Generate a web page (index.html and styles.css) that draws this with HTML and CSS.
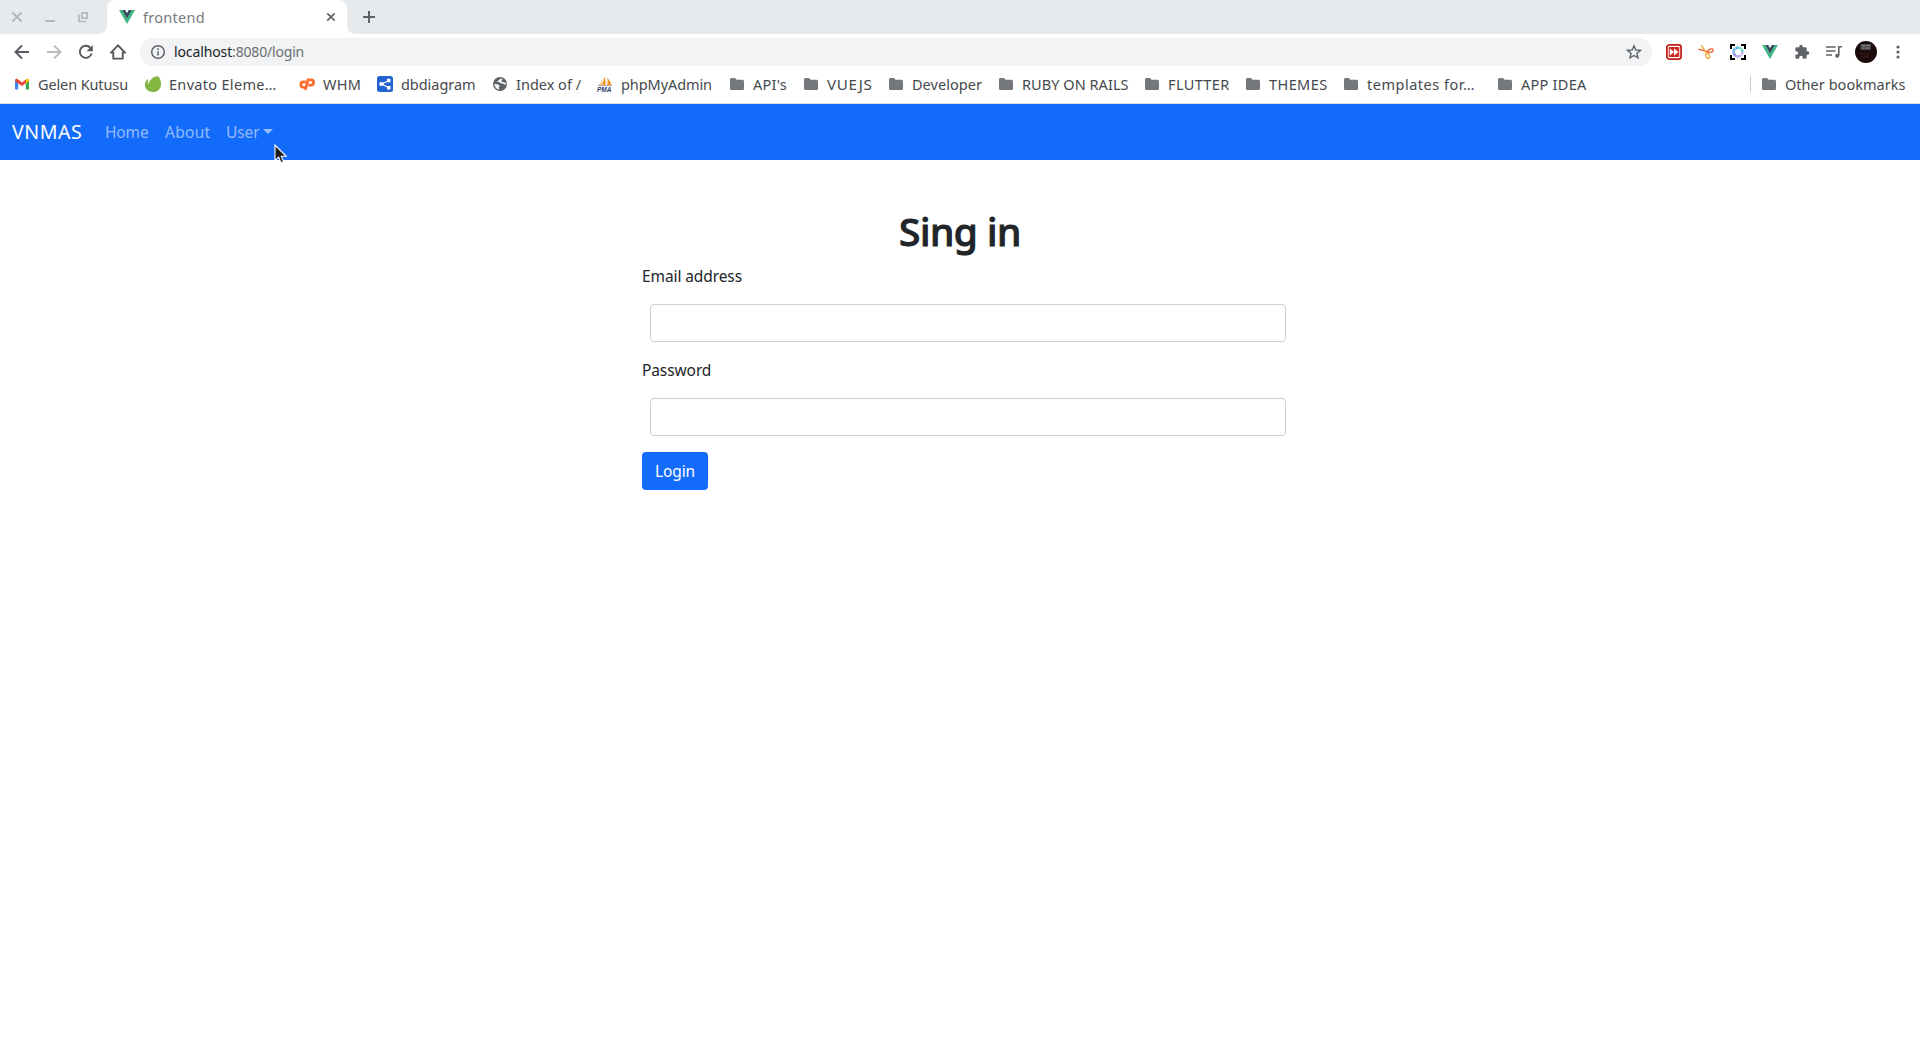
FILE: index.html
```html
<!DOCTYPE html>
<html lang="en">
<head>
<meta charset="utf-8">
<title>frontend</title>
<link rel="stylesheet" href="styles.css">
</head>
<body>
<svg class="defs" width="0" height="0" aria-hidden="true">
  <symbol id="vue" viewBox="0 0 16 14"><path fill="#41b883" d="M0 0h3.2L8 8.3 12.8 0H16L8 14z"/><path fill="#35495e" d="M3.2 0h3L8 3.2 9.8 0h3L8 8.5z"/></symbol>
  <symbol id="folder" viewBox="0 0 16 16"><path fill="#74787c" d="M2.6 2H6l1.6 1.8h5.8c.9 0 1.6.7 1.6 1.6v7c0 .9-.7 1.6-1.6 1.6H2.6c-.9 0-1.6-.7-1.6-1.6V3.6C1 2.700 1.700 2 2.600 2z"/></symbol>
</svg>

<header class="browser">
  <div class="tabstrip">
    <div class="window-controls">
      <svg width="16" height="16" viewBox="0 0 16 16"><path d="M3.500 3.500l9 9M12.500 3.500l-9 9"/></svg>
      <svg width="16" height="16" viewBox="0 0 16 16"><path d="M3 12h10"/></svg>
      <svg width="16" height="16" viewBox="0 0 16 16"><path d="M6.800 3.800h5.400v5.400H6.800zM4 5.500v7h7"/></svg>
    </div>
    <div class="tab">
      <svg class="tab-icon" width="16" height="14"><use href="#vue"/></svg>
      <span class="tab-title">frontend</span>
      <svg class="tab-close" width="16" height="16" viewBox="0 0 16 16"><path d="M4.300 4.300l7.400 7.400M11.700 4.300l-7.400 7.400"/></svg>
    </div>
    <svg class="new-tab" width="16" height="16" viewBox="0 0 16 16"><path d="M8 2v12M2 8h12"/></svg>
  </div>

  <div class="toolbar">
    <div class="nav-buttons">
      <svg width="16" height="16" viewBox="0 0 16 16"><path d="M15 8H2M8 1.500L1.500 8 8 14.500"/></svg>
      <svg class="disabled" width="16" height="16" viewBox="0 0 16 16"><path d="M1 8h13M8 1.500L14.500 8 8 14.500"/></svg>
      <svg width="16" height="16" viewBox="0 0 16 16"><path d="M13.600 9.500A6 6 0 1 1 12.300 3.800"/><path class="solid" d="M14.800 1v6.300H8.500z"/></svg>
      <svg width="16" height="16" viewBox="0 0 16 16"><path d="M1 8.600L8 1.400l7 7.200h-2.300v6H3.300v-6z"/></svg>
    </div>
    <div class="omnibox">
      <svg width="16" height="16" viewBox="0 0 16 16"><circle cx="8" cy="8" r="6.300"/><path d="M8 7.200v4.300M8 4.200v1.700"/></svg>
      <span class="url"><b>localhost</b><i>:8080/login</i></span>
      <svg class="star" width="16" height="16" viewBox="0 0 16 16"><path d="M8 1.800l1.800 4.200 4.600.4-3.500 3 1.100 4.500L8 11.500l-4 2.400 1.100-4.500-3.500-3L6.200 6z"/></svg>
    </div>
    <div class="extensions">
      <svg width="16" height="16" viewBox="0 0 16 16"><rect x=".9" y=".9" width="14.200" height="14.200" rx="2.500" fill="#fff" stroke="#bd211c" stroke-width="1.800"/><rect x="2.700" y="2.900" width="10.600" height="10.200" rx="1" fill="#c9302b"/><path fill="#fff" d="M3.800 4.400L8 8l-4.200 3.600zM8 4.400L12.600 8 8 11.600z"/></svg>
      <svg width="16" height="16" viewBox="0 0 16 16" fill="none" stroke-width="1.300"><path stroke="#e8582c" d="M.4 5.200l9.800 2.600"/><path stroke="#f4a62a" d="M3.200 1.200L9 9.800"/><ellipse cx="12.700" cy="6.600" rx="2.600" ry="1.600" stroke="#e8582c" transform="rotate(-10 12.700 6.600)"/><ellipse cx="9.600" cy="12" rx="1.900" ry="2.500" stroke="#f4a62a" transform="rotate(-18 9.600 12)"/></svg>
      <svg width="16" height="16" viewBox="0 0 16 16" fill="none"><path stroke="#000" stroke-width="2" d="M1 5V1h4M11 1h4v4M15 11v4h-4M5 15H1v-4"/><g stroke-width="2.600"><path stroke="#62b3e8" d="M3.600 8A4.400 4.400 0 0 1 8 3.600"/><path stroke="#75d9cd" d="M8 3.600A4.400 4.400 0 0 1 12.400 8"/><path stroke="#c9b3f3" d="M12.400 8A4.400 4.400 0 0 1 8 12.400"/><path stroke="#908ee8" d="M8 12.400A4.400 4.400 0 0 1 3.600 8"/></g><path stroke="#fff" stroke-width=".6" d="M5 3.500l1 3M11.800 4.500l-2.600 1.600M12 11l-2.800-.8M7 13l-.5-3M3 8.500l2.800-1"/></svg>
      <svg width="16" height="14"><use href="#vue"/></svg>
      <svg width="16" height="16" viewBox="0 0 24 24" fill="#5f6368"><path d="M20.500 11H19V7a2 2 0 0 0-2-2h-4V3.500a2.500 2.500 0 0 0-5 0V5H4a2 2 0 0 0-2 2v3.800h1.500a2.700 2.700 0 0 1 0 5.400H2V20a2 2 0 0 0 2 2h3.800v-1.500a2.700 2.700 0 0 1 5.400 0V22H17a2 2 0 0 0 2-2v-4h1.500a2.500 2.500 0 0 0 0-5z"/></svg>
      <svg width="16" height="16" viewBox="0 0 16 16" fill="none" stroke="#5f6368" stroke-width="1.600"><path d="M0 3h9.500M0 7h9.500M0 11h6M16 2.800h-3.200v8.500"/><circle cx="11.200" cy="11.700" r="2" fill="#5f6368" stroke="none"/></svg>
      <svg class="avatar" width="22" height="22" viewBox="0 0 22 22"><circle cx="11" cy="11" r="11" fill="#1b0c0b"/><path fill="#4a484d" d="M5.500 3h10.500v6H5.500z"/><path stroke="#898b91" d="M6.500 4.500h3.500M11 4.500h4M7 7h3M11 7h3"/><path stroke="#40201a" d="M5 13h5M13 12v4M7 16h7"/></svg>
      <svg width="16" height="16" viewBox="0 0 16 16" fill="#5f6368"><circle cx="8" cy="3" r="1.600"/><circle cx="8" cy="8" r="1.600"/><circle cx="8" cy="13" r="1.600"/></svg>
    </div>
  </div>

  <nav class="bookmarks">
    <a class="bm gmail"><svg width="16" height="16" viewBox="0 0 16 16"><path fill="#4285f4" d="M1 4v8.500c0 .6.400 1 1 1h2.200V6.500z"/><path fill="#34a853" d="M15 4v8.500c0 .6-.4 1-1 1h-2.200V6.500z"/><path fill="#ea4335" d="M1 4.200C1 2.800 2.500 2.200 3.500 3L8 6.400 12.500 3v3.500L8 10 1 5z"/><path fill="#fbbc04" d="M11.800 3.500c1.200-1.200 3.200-.6 3.200.8V5.300l-3.200 2.500z"/></svg><span>Gelen Kutusu</span></a>
    <a class="bm envato"><svg width="16" height="16" viewBox="0 0 16 16"><path fill="#82b541" d="M12.800.3c1.300.4 3.200 3.700 3.200 7.600 0 4.500-3.300 7.900-7.500 8.100C3.700 16.200.2 13.200 0 9.300c-.1-2.400.8-4.500 2-5.800.6-.5 1 0 .9.700-.2 1.700 0 3.300.5 4.200C3.800 4.200 9.500-.6 12.800.3z"/></svg><span>Envato Eleme…</span></a>
    <a class="bm whm"><svg width="16" height="16" viewBox="0 0 16 16" fill="none" stroke="#ff6c2c" stroke-width="2.700"><path d="M6.800 5.900H4.500a2.700 2.700 0 0 0 0 5.400h1.100M6.300 13.800L9 3.900h3.100a2.600 2.600 0 0 1 0 5.200H9.400"/></svg><span>WHM</span></a>
    <a class="bm dbdiagram"><svg width="16" height="16" viewBox="0 0 16 16"><rect width="16" height="16" rx="2.500" fill="#2464d2"/><path stroke="#fff" stroke-width="1.200" fill="none" d="M12 4.500L4.500 8l7.500 3.800"/><path fill="#fff" d="M2.500 6.300h4v3.400h-4zM10 2.800h3.500v3.400H10zM10 10h3.500v3.400H10z"/></svg><span>dbdiagram</span></a>
    <a class="bm index"><svg width="16" height="16" viewBox="0 0 16 16"><circle cx="8" cy="8" r="7" fill="#5f6368"/><path fill="#fff" d="M8.800 2.500c-1 .5-1.300 1.500-2.300 2L4.800 5.800l2.700.4 2 1.300 2.300.2 1.800 1.500.2-2.200-2.800-1-1.800-.2.500-1.200 1-1.200zM2.400 8l3.800.4 1.600 1.500-1.100 1.300.6 1.600-.5.800C4.200 12.800 2.500 10.500 2.400 8z"/></svg><span>Index of /</span></a>
    <a class="bm pma"><svg width="16" height="16" viewBox="0 0 16 16"><path fill="#f7941d" d="M7 .5c1.500 2.500 2 5.500 1.500 8.500H4.500C6.200 6.500 7 3.500 7 .5zM10.300 2c2 1.800 3.500 4.500 4.200 7H10c.7-2.300.8-4.800.3-7z"/><path fill="#f9b866" d="M4.500 3c.3 2-.7 4.300-3 6h2.200C5.200 7 5.200 5 4.500 3z"/><path fill="#8c93aa" d="M1 9.300h14v.8H1z"/><text x="0" y="16" class="pma-text">PMA</text></svg><span>phpMyAdmin</span></a>
    <a class="bm apis"><svg width="16" height="16"><use href="#folder"/></svg><span>API's</span></a>
    <a class="bm vuejs"><svg width="16" height="16"><use href="#folder"/></svg><span>VUEJS</span></a>
    <a class="bm developer"><svg width="16" height="16"><use href="#folder"/></svg><span>Developer</span></a>
    <a class="bm rails"><svg width="16" height="16"><use href="#folder"/></svg><span>RUBY ON RAILS</span></a>
    <a class="bm flutter"><svg width="16" height="16"><use href="#folder"/></svg><span>FLUTTER</span></a>
    <a class="bm themes"><svg width="16" height="16"><use href="#folder"/></svg><span>THEMES</span></a>
    <a class="bm templates"><svg width="16" height="16"><use href="#folder"/></svg><span>templates for…</span></a>
    <a class="bm idea"><svg width="16" height="16"><use href="#folder"/></svg><span>APP IDEA</span></a>
    <a class="bm other"><svg width="16" height="16"><use href="#folder"/></svg><span>Other bookmarks</span></a>
  </nav>
</header>

<nav class="navbar">
  <a class="brand">VNMAS</a>
  <a class="link home">Home</a>
  <a class="link about">About</a>
  <a class="link user">User<span class="caret"></span></a>
</nav>

<main class="login">
  <h1>Sing in</h1>
  <form>
    <label for="email">Email address</label>
    <input id="email" type="email">
    <label for="password">Password</label>
    <input id="password" type="password">
    <button type="button">Login</button>
  </form>
</main>

<svg class="cursor" width="14" height="21" viewBox="0 0 14 21"><path d="M1 1v15.500l3.700-3.300L7 18.800l2.600-1.100-2.300-5.400h4.900z" fill="#1c1c1c" stroke="#fff" stroke-width="1.100"/></svg>
</body>
</html>
```
FILE: styles.css
```css
* { box-sizing: border-box; }
body {
  margin: 0;
  height: 1053px;
  overflow: hidden;
  background: #fff;
  color: #212529;
  font: 15.5px/24px "Noto Sans", sans-serif;
}
svg { display: block; flex: none; }
.defs { position: absolute; }

/* Tab strip */
.tabstrip {
  display: flex;
  align-items: center;
  height: 34px;
  background: #e7eaed;
}
.window-controls {
  display: flex;
  gap: 17px;
  width: 107px;
  padding-left: 9px;
  fill: none;
  stroke: #b5b8ba;
  stroke-width: 2;
}
.window-controls svg:last-child { stroke-width: 1.7; }
.tab {
  position: relative;
  display: flex;
  align-items: center;
  width: 240px;
  height: 34px;
  padding: 0 8px 0 12px;
  border-radius: 8px 8px 0 0;
  background: #fff;
}
.tab::before, .tab::after {
  content: "";
  position: absolute;
  bottom: 0;
  width: 8px;
  height: 8px;
}
.tab::before { left: -8px; background: radial-gradient(circle at 0 0, transparent 7.5px, #fff 8px); }
.tab::after { right: -8px; background: radial-gradient(circle at 100% 0, transparent 7.5px, #fff 8px); }
.tab-title {
  flex: 1;
  margin-left: 8px;
  padding-bottom: 1px;
  color: #777a7d;
  font-size: 14.5px;
  letter-spacing: .29px;
}
.tab-close, .new-tab { fill: none; stroke: #5f6368; stroke-width: 1.7; }
.new-tab { margin-left: 14px; stroke-width: 2; }

/* Toolbar */
.toolbar {
  display: flex;
  align-items: center;
  height: 36px;
  padding: 0 14px;
}
.nav-buttons {
  display: flex;
  gap: 16px;
  width: 126px;
  fill: none;
  stroke: #55595d;
  stroke-width: 1.9;
}
.nav-buttons .disabled { stroke: #b9bbbd; }
.nav-buttons .solid { fill: #55595d; stroke: none; }
.omnibox {
  display: flex;
  align-items: center;
  width: 1512px;
  height: 28px;
  padding: 0 10px;
  border-radius: 14px;
  background: #f1f3f4;
  fill: none;
  stroke: #5f6368;
  stroke-width: 1.5;
}
.url { flex: 1; margin-left: 8px; font-size: 14px; }
.url b { color: #202124; font-weight: 400; letter-spacing: -.12px; }
.url i { color: #6a6e72; font-style: normal; letter-spacing: -.18px; }
.star { stroke-width: 1.4; }
.extensions { display: flex; align-items: center; gap: 16px; margin-left: 14px; }
.avatar { margin: 0 -3px; }

/* Bookmarks bar */
.bookmarks {
  display: flex;
  align-items: center;
  height: 34px;
  padding: 0 14px 4px;
  border-bottom: 1px solid #dadce0;
  color: #45494d;
  font-size: 14.5px;
  white-space: nowrap;
}
.bm { display: flex; align-items: center; gap: 8px; flex: none; height: 31px; padding-bottom: 1px; }
.gmail { width: 131px; letter-spacing: -.12px; }
.envato { width: 154px; letter-spacing: .31px; }
.whm { width: 78px; letter-spacing: .2px; }
.dbdiagram { width: 115px; letter-spacing: -.05px; }
.index { width: 105px; }
.pma { width: 132px; letter-spacing: -.08px; }
.apis { width: 74px; letter-spacing: .25px; }
.vuejs { width: 85px; font-size: 15.2px; letter-spacing: .7px; }
.developer { width: 110px; letter-spacing: .04px; }
.rails { width: 146px; letter-spacing: .05px; }
.flutter { width: 101px; letter-spacing: .35px; }
.themes { width: 98px; letter-spacing: .41px; }
.templates { width: 154px; letter-spacing: .51px; }
.idea { letter-spacing: .26px; }
.other {
  position: relative;
  width: 145px;
  margin-left: auto;
  letter-spacing: .03px;
}
.other::before {
  content: "";
  position: absolute;
  left: -11px;
  top: 7px;
  height: 16px;
  border-left: 1px solid #cbcdd0;
}
.pma-text { fill: #313a68; font: italic bold 6.5px "Liberation Sans", sans-serif; letter-spacing: 0; }

/* Site navigation */
.navbar {
  display: flex;
  align-items: center;
  height: 56px;
  padding: 0 12px;
  background: #126bfb;
}
.brand { width: 93px; color: #fff; font-size: 19.6px; letter-spacing: .5px; }
.link { color: rgba(255, 255, 255, .55); }
.home { width: 60px; letter-spacing: -.15px; }
.about { width: 61px; letter-spacing: .3px; }
.user { display: flex; align-items: center; letter-spacing: -.1px; }
.caret {
  margin: 0 0 2px 3px;
  border: solid transparent;
  border-width: 5px 5px 0;
  border-top-color: currentColor;
}

/* Sign-in form */
.login { width: 636px; margin: 0 auto; padding-top: 47px; }
h1 {
  margin: 0 0 9px;
  font-size: 38.8px;
  font-weight: 500;
  line-height: 48px;
  letter-spacing: -.44px;
  text-align: center;
  -webkit-text-stroke: 1px #212529;
}
form { display: flex; flex-direction: column; align-items: flex-start; }
label { margin-bottom: 8px; letter-spacing: -.1px; }
input {
  width: 636px;
  height: 38px;
  margin: 8px 0 16px 8px;
  padding: 6px 12px;
  border: 1px solid #cbd0d7;
  border-radius: 4px;
  background: #fff;
  flex: none;
}
button {
  width: 66px;
  height: 38px;
  padding: 0;
  border: 0;
  border-radius: 4px;
  background: #126bfb;
  color: #fff;
  font: inherit;
  letter-spacing: -.13px;
}

.cursor { position: absolute; left: 274px; top: 144px; }
```
